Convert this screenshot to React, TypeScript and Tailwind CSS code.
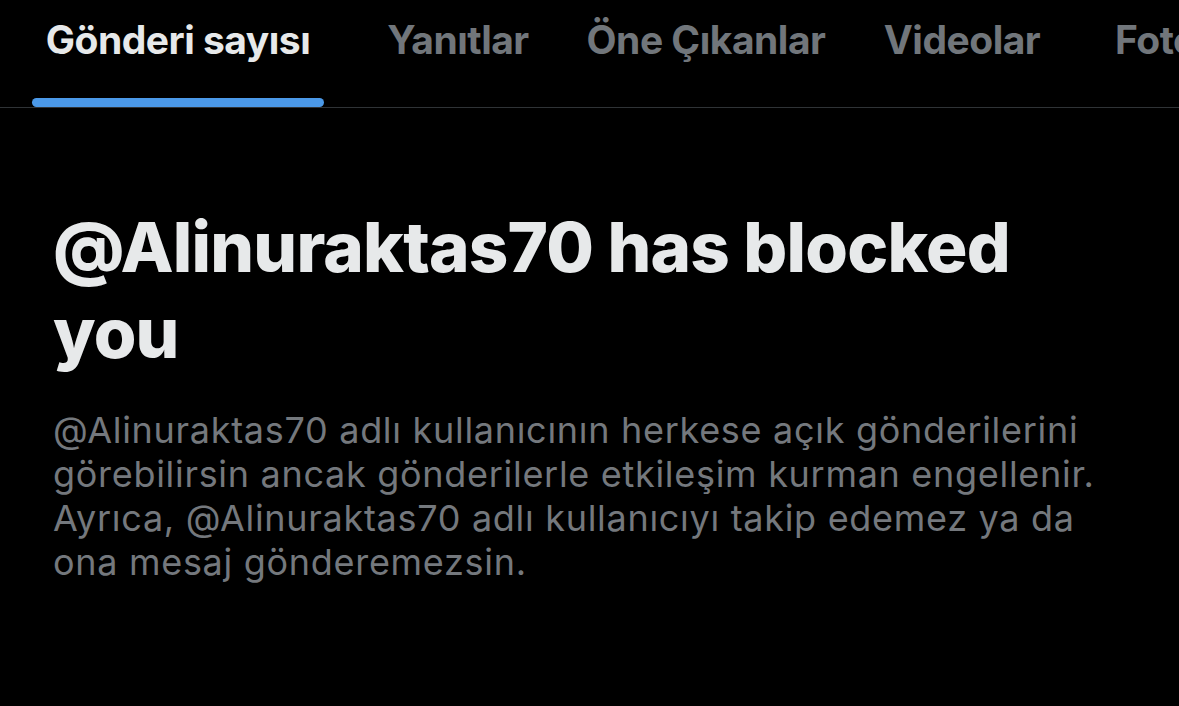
import React from 'react';

const tabs = [
    { label: 'Gönderi sayısı', width: 'w-[356px]', active: true },
    { label: 'Yanıtlar', width: 'w-[204px]', active: false },
    { label: 'Öne Çıkanlar', width: 'w-[292px]', active: false },
    { label: 'Videolar', width: 'w-[220px]', active: false },
];

const App = () => {
    return (
        <div
            className="w-[1179px] h-[706px] overflow-hidden bg-black text-[#e7e9ea]"
            style={{ fontFamily: 'Inter, "Noto Sans", sans-serif' }}
        >
            {/* Tabs */}
            <div className="flex h-[108px] border-b border-[#2f3336] whitespace-nowrap">
                {tabs.map(tab => (
                    <div key={tab.label} className={`${tab.width} shrink-0 flex flex-col items-center`}>
                        <div
                            className={`pt-[16px] text-[39px] leading-[48px] font-bold tracking-[-0.5px] ${
                                tab.active ? 'text-[#e7e9ea]' : 'text-[#71767b]'
                            }`}
                        >
                            {tab.label}
                        </div>
                        <div className="flex-1" />
                        {tab.active && <div className="w-[292px] h-[9px] rounded-full bg-[#4b99e8]" />}
                    </div>
                ))}
                <div className="shrink-0 pl-[43px] pt-[16px] text-[39px] leading-[48px] font-bold tracking-[-0.5px] text-[#71767b]">
                    Fotoğraflar
                </div>
            </div>

            {/* Blocked message */}
            <div className="pl-[53px] pr-[60px] pt-[96px]">
                <h1 className="text-[69px] leading-[86px] font-extrabold tracking-[-0.8px] text-[#e7e9ea]">
                    @Alinuraktas70 has blocked you
                </h1>
                <p className="mt-[32px] text-[36px] leading-[44px] tracking-[0.7px] text-[#74787d]">
                    @Alinuraktas70 adlı kullanıcının herkese açık gönderilerini görebilirsin ancak gönderilerle
                    etkileşim kurman engellenir. Ayrıca, @Alinuraktas70 adlı kullanıcıyı takip edemez ya da ona mesaj
                    gönderemezsin.
                </p>
            </div>
        </div>
    );
};

export default App;
